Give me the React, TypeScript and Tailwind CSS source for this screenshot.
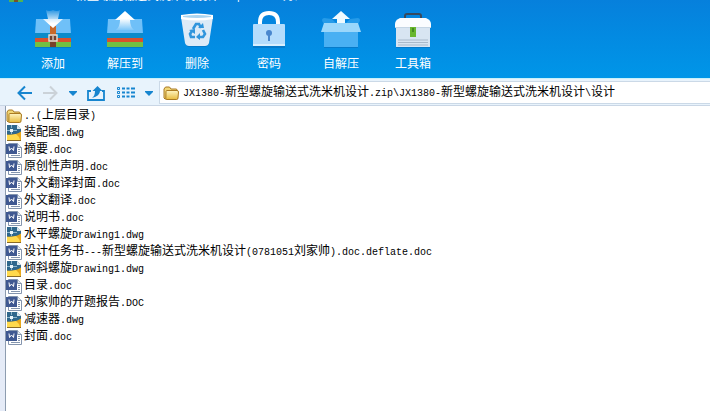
import { Fragment, type ReactNode } from "react";

const tools = [
  { label: "添加", icon: <AddIcon /> },
  { label: "解压到", icon: <ExtractIcon /> },
  { label: "删除", icon: <DeleteIcon /> },
  { label: "密码", icon: <LockIcon /> },
  { label: "自解压", icon: <BoxIcon /> },
  { label: "工具箱", icon: <ToolboxIcon /> },
];

const files = [
  { name: "..(上层目录)", type: "folder" },
  { name: "装配图.dwg", type: "dwg" },
  { name: "摘要.doc", type: "doc" },
  { name: "原创性声明.doc", type: "doc" },
  { name: "外文翻译封面.doc", type: "doc" },
  { name: "外文翻译.doc", type: "doc" },
  { name: "说明书.doc", type: "doc" },
  { name: "水平螺旋Drawing1.dwg", type: "dwg" },
  { name: "设计任务书---新型螺旋输送式洗米机设计(0781051刘家帅).doc.deflate.doc", type: "doc" },
  { name: "倾斜螺旋Drawing1.dwg", type: "dwg" },
  { name: "目录.doc", type: "doc" },
  { name: "刘家帅的开题报告.DOC", type: "doc" },
  { name: "减速器.dwg", type: "dwg" },
  { name: "封面.doc", type: "doc" },
];

const path = "JX1380-新型螺旋输送式洗米机设计.zip\\JX1380-新型螺旋输送式洗米机设计\\设计";

// Latin runs are half as wide as a Chinese character
function MixedText({ text }: { text: string }) {
  const runs = text.match(/[\x20-\x7e]+|[^\x20-\x7e]+/g) ?? [];
  return (
    <span className="whitespace-pre">
      {runs.map((run, i) =>
        run.charCodeAt(0) < 128 ? (
          <span key={i} className="font-['Liberation_Mono',monospace] text-[10px]">
            {run}
          </span>
        ) : (
          <Fragment key={i}>{run}</Fragment>
        )
      )}
    </span>
  );
}

function ToolSvg({ children }: { children: ReactNode }) {
  return (
    <svg width="40" height="40" viewBox="0 0 40 40" aria-hidden="true">
      {children}
    </svg>
  );
}

function Books() {
  return (
    <>
      <rect x="2" y="37" width="36" height="2" fill="#0672b8" opacity=".6" />
      <path d="M3 10h34l1 15H2z" fill="#6fc0f8" />
      <path d="M2 24h36v5H2z" fill="#0b8bc9" />
      <path d="M2 29h36v4H2z" fill="#d8512d" />
      <path d="M2 33h36v5H2z" fill="#72c043" />
    </>
  );
}

function AddIcon() {
  return (
    <ToolSvg>
      <defs>
        <linearGradient id="down" x1="0" y1="0" x2="0" y2="1">
          <stop offset="0" stopColor="#fff" stopOpacity=".15" />
          <stop offset=".75" stopColor="#fff" />
        </linearGradient>
      </defs>
      <Books />
      <path d="M17 17h6v21h-6z" fill="#c7682b" />
      <path d="M17 30h6v8h-6z" fill="#79402a" />
      <path d="M16 26h8v6h-8z" fill="#70412f" stroke="#ebe1d8" strokeWidth="1.4" />
      <path d="M20 27v4" stroke="#fff" />
      <path d="M13 1q3 2 7 0q4 2 7 0l-2 9h5L20 19 10 10h5z" fill="url(#down)" />
    </ToolSvg>
  );
}

function ExtractIcon() {
  return (
    <ToolSvg>
      <defs>
        <linearGradient id="up" x1="0" y1="0" x2="0" y2="1">
          <stop offset=".4" stopColor="#fff" />
          <stop offset="1" stopColor="#fff" stopOpacity=".1" />
        </linearGradient>
      </defs>
      <Books />
      <path d="M20 2l10 9h-5q0 7 4 10H11q4-3 4-10h-5z" fill="url(#up)" />
    </ToolSvg>
  );
}

function DeleteIcon() {
  return (
    <ToolSvg>
      <path d="M8 35h24l-3 3H11z" fill="#0768b2" opacity=".5" />
      <path d="M4 8h32l-4 26q-1 3-4 3H12q-3 0-4-3z" fill="#dceaf7" />
      <path d="M4 6q16-3 32 0v4q-16 3-32 0z" fill="#fff" />
      <path d="M6 7q14-2 28 0v1q-14 2-28 0z" fill="#a9d4f1" />
      <g fill="none" stroke="#3195dc" strokeWidth="2.6">
        <path d="M16 20l3-5h3l2 4" />
        <path d="M26 21l2 4-2 3h-5" />
        <path d="M18 28h-4l-1-3 2-3" />
      </g>
      <path d="M21 19h6l-1-5zM23 24v7l-4-3zM12 21l6-1v5z" fill="#3195dc" />
    </ToolSvg>
  );
}

function LockIcon() {
  return (
    <ToolSvg>
      <path d="M4 35h32v4H4z" fill="#0768b2" opacity=".5" />
      <path d="M11 17v-4q0-9 9-9t9 9v4" fill="none" stroke="#fff" strokeWidth="4" />
      <rect x="4" y="15" width="32" height="22" rx="1" fill="#b4dcfc" />
      <path d="M4 35h32v2H4z" fill="#d9effe" />
      <circle cx="20" cy="24" r="3" fill="#4987ce" />
      <path d="M19 25h2v7h-2z" fill="#4987ce" />
    </ToolSvg>
  );
}

function BoxIcon() {
  return (
    <ToolSvg>
      <path d="M3 37h34v2H3z" fill="#0768b2" opacity=".5" />
      <path d="M3 15q-4-5 0-6l8 1 5 5M37 15q4-5 0-6l-8 1-5 5" fill="#3eaaf0" opacity=".6" />
      <path d="M3 21h34v17H3z" fill="#49b0f3" />
      <path d="M20 2l9 8h-5v6h-8v-6h-5z" fill="#effaff" />
      <path d="M3 14h34l3 9H0z" fill="#9bd7fb" />
    </ToolSvg>
  );
}

function ToolboxIcon() {
  return (
    <ToolSvg>
      <path d="M3 37h34v2H3z" fill="#0768b2" opacity=".5" />
      <path d="M12 10V7q0-2 2-2h12q2 0 2 2v3" fill="none" stroke="#37495e" strokeWidth="2" />
      <path d="M3 17h34v21H3z" fill="#d8e5f2" />
      <path d="M7 9h26q5 2 5 6v4H2v-4q0-4 5-6z" fill="#fafcff" />
      <path d="M2 18h36v1H2z" fill="#c5d5e4" />
      <path d="M5 31h30M5 33.500h30M5 36h30" stroke="#a9b9ca" />
      <path d="M17 18h6v10h-6z" fill="#68b62f" />
      <path d="M20 19v4" stroke="#397b1e" strokeWidth="1.500" />
    </ToolSvg>
  );
}

function FolderIcon() {
  return (
    <svg width="16" height="16" viewBox="0 0 16 16" className="shrink-0" aria-hidden="true">
      <defs>
        <linearGradient id="folder" x1="0" y1="0" x2="0" y2="1">
          <stop offset="0" stopColor="#fff5c2" />
          <stop offset="1" stopColor="#e8bb3e" />
        </linearGradient>
      </defs>
      <path d="M1 13V4l1.500-2h4L8 4h5.500l1 2v7l-1 1H2z" fill="#f1d676" stroke="#a87924" />
      <path d="M3 6.500q0-1 1-1h10q1.500 0 1.500 1.500l-.5 6q0 1.500-1.500 1.500H4q-1 0-1.200-1z" fill="url(#folder)" stroke="#ab7b22" />
    </svg>
  );
}

function DwgIcon() {
  return (
    <svg width="16" height="16" viewBox="0 0 16 16" className="shrink-0" aria-hidden="true">
      <path d="M1 0h10l4 4v12H1z" fill="#2f678c" />
      <path d="M1 9.500q8 1 14-3V16H1z" fill="#e9a91c" />
      <path d="M1 10q6 0 9-1 3 2 4 6H1z" fill="#ffd94c" />
      <path d="M11 0v4h4z" fill="#d9e7ef" />
      <path d="M5.500 0v3M5.500 7v2M1 5.500h3M7 5.500h4" stroke="#8fb6cc" />
      <path d="M4 4h3v3H4z" fill="#e8f4fb" />
      <path d="M1 15.500h14" stroke="#8a6a24" />
    </svg>
  );
}

function DocIcon() {
  return (
    <svg width="16" height="16" viewBox="0 0 16 16" className="shrink-0" aria-hidden="true">
      <path d="M2.500 1.500h9l4 4v10h-13z" fill="#fff" stroke="#8495ae" />
      <path d="M11.500 1.500v4h4" fill="#e3eaf2" stroke="#8495ae" />
      <path d="M12 7.500h2M12 9.500h2M12 11.500h2M5 13.500h9" stroke="#8495ae" />
      <path d="M0 2h11v10H0z" fill="#3f5891" />
      <path d="M3 4.500l.5 4 2-2.500 2 2.500.5-4" fill="none" stroke="#fff" />
    </svg>
  );
}

function FileIcon({ type }: { type: string }) {
  switch (type) {
    case "folder":
      return <FolderIcon />;
    case "dwg":
      return <DwgIcon />;
    default:
      return <DocIcon />;
  }
}

function Caret() {
  return (
    <svg width="8" height="5" viewBox="0 0 8 5" aria-hidden="true">
      <path d="M0 0h8v1L4 5 0 1z" fill="#1685cf" />
    </svg>
  );
}

export default function App() {
  return (
    <div className="min-h-screen flex flex-col bg-white text-black text-[12px] leading-4 font-['Liberation_Sans','Noto_Sans_CJK_SC',sans-serif]">
      <header className="h-[79px] shrink-0 bg-gradient-to-b from-[#0680dc] to-[#0096e8] border-b border-[#c7f1fa] text-white">
        <div className="h-[3px] flex items-end overflow-hidden pl-2">
          <svg width="16" height="16" viewBox="0 0 16 16" className="shrink-0" aria-hidden="true">
            <path d="M1 2h14v8H1z" fill="#6fc0f8" />
            <path d="M1 10h14v3H1z" fill="#d8512d" />
            <path d="M1 13h14v2H1z" fill="#53b254" />
            <path d="M6 3h4v12H6z" fill="#79502a" />
          </svg>
          <h1 className="flex gap-7 pl-[51px] leading-[10px]">
            <MixedText text="新型螺旋输送式洗米机设计.zip -" />
            <span>好压</span>
          </h1>
        </div>
        <nav className="flex pl-[17px] pt-[6px]">
          {tools.map((tool) => (
            <button key={tool.label} className="w-[72px] flex flex-col items-center gap-[7px]">
              {tool.icon}
              <span>{tool.label}</span>
            </button>
          ))}
        </nav>
      </header>

      <div className="h-[27px] shrink-0 flex items-stretch bg-[#e8f3fc] border-b border-[#c9d6e5]">
        <div className="w-[159px] shrink-0 flex items-center pt-[2px] pl-[17px] text-[#1685cf]">
          <button aria-label="后退">
            <svg width="16" height="16" viewBox="0 0 16 16" fill="none" stroke="currentColor" strokeWidth="2" aria-hidden="true">
              <path d="M15 8H2M8 1.500L1.500 8 8 14.500" />
            </svg>
          </button>
          <button aria-label="前进" className="ml-[9px] text-[#cbd2d8]">
            <svg width="16" height="16" viewBox="0 0 16 16" fill="none" stroke="currentColor" strokeWidth="2" aria-hidden="true">
              <path d="M1 8h13M8 1.500L14.500 8 8 14.500" />
            </svg>
          </button>
          <button aria-label="历史记录" className="ml-[11px]">
            <Caret />
          </button>
          <button aria-label="上一级" className="ml-[10px]">
            <svg width="18" height="16" viewBox="0 0 18 16" aria-hidden="true">
              <path d="M4 6H1v9h16V6h-2" fill="none" stroke="currentColor" strokeWidth="1.800" />
              <path d="M5 13q3-2 3-7H5.500L10.500 1l5 5H13q0 5-8 7z" fill="currentColor" />
            </svg>
          </button>
          <button aria-label="视图" className="ml-3">
            <svg width="18" height="12" viewBox="0 0 18 12" fill="none" stroke="currentColor" aria-hidden="true">
              <path d="M.5 .5h2v2h-2zM.5 4.500h2v2h-2zM.5 8.500h2v2h-2z" />
              <path d="M5 1.500h3M9.500 1.500h3M14 1.500h4M5 5.500h3M9.500 5.500h3M14 5.500h4M5 9.500h3M9.500 9.500h3M14 9.500h4" strokeWidth="2" />
            </svg>
          </button>
          <button aria-label="视图选项" className="ml-[10px]">
            <Caret />
          </button>
        </div>
        <div className="flex-1 min-w-0 mt-[2px] mb-px flex items-center gap-1 pl-[3px] bg-white border border-r-0 border-[#cbd9e7]">
          <FolderIcon />
          <MixedText text={path} />
        </div>
      </div>

      <main className="flex-1 flex">
        <div className="w-[5px] shrink-0 bg-[#e5ebf7]" />
        <ul className="flex-1 border-l border-[#8d9caf] pt-px">
          {files.map((file) => (
            <li key={file.name}>
              <a href="#" className="flex items-center gap-[2px] h-[17px]">
                <FileIcon type={file.type} />
                <MixedText text={file.name} />
              </a>
            </li>
          ))}
        </ul>
      </main>
    </div>
  );
}
